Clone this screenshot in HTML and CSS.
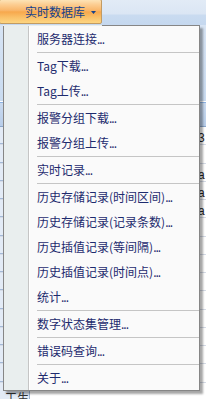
FILE: index.html
```html
<!DOCTYPE html>
<html lang="zh">
<head>
<meta charset="utf-8">
<link rel="stylesheet" href="styles.css">
</head>
<body>
<div class="app">
  <div class="tabstrip">
    <div class="dd-btn">
      <span class="dd-label">实时数据库</span>
      <svg class="dd-arrow" width="5" height="3" viewBox="0 0 5 3"><path d="M0 0H5L2.5 3Z" fill="#15428b"/></svg>
    </div>
  </div>
  <div class="ribbon"></div>
  <div class="grid-head"></div>
  <div class="grid">
    <div class="row"><span class="rh"></span><span class="cell">3</span></div>
    <div class="row"><span class="rh"></span><span class="cell"></span></div>
    <div class="row"><span class="rh"></span><span class="cell">a</span></div>
    <div class="row"><span class="rh"></span><span class="cell">a</span></div>
    <div class="row"><span class="rh"></span><span class="cell">a</span></div>
    <div class="row"><span class="rh"></span><span class="cell"></span></div>
    <div class="row"><span class="rh"></span><span class="cell"></span></div>
    <div class="row"><span class="rh"></span><span class="cell"></span></div>
    <div class="row"><span class="rh"></span><span class="cell"></span></div>
    <div class="row"><span class="rh"></span><span class="cell"></span></div>
    <div class="row"><span class="rh"></span><span class="cell"></span></div>
    <div class="row"><span class="rh"></span><span class="cell"></span></div>
    <div class="row"><span class="rh"></span><span class="cell"></span></div>
    <div class="row"><span class="rh"></span><span class="cell"></span></div>
    <div class="row"><span class="rh"><span class="rtext">工生</span></span><span class="cell"></span></div>
  </div>
</div>

<div class="menu">
  <div class="item">服务器连接<span class="dots">...</span></div>
  <div class="sep"></div>
  <div class="item">Tag下载<span class="dots">...</span></div>
  <div class="item">Tag上传<span class="dots">...</span></div>
  <div class="sep"></div>
  <div class="item">报警分组下载<span class="dots">...</span></div>
  <div class="item">报警分组上传<span class="dots">...</span></div>
  <div class="sep"></div>
  <div class="item">实时记录<span class="dots">...</span></div>
  <div class="sep"></div>
  <div class="item">历史存储记录(时间区间)<span class="dots">...</span></div>
  <div class="item">历史存储记录(记录条数)<span class="dots">...</span></div>
  <div class="item">历史插值记录(等间隔)<span class="dots">...</span></div>
  <div class="item">历史插值记录(时间点)<span class="dots">...</span></div>
  <div class="item">统计<span class="dots">...</span></div>
  <div class="sep"></div>
  <div class="item">数字状态集管理<span class="dots">...</span></div>
  <div class="sep"></div>
  <div class="item">错误码查询<span class="dots">...</span></div>
  <div class="sep"></div>
  <div class="item">关于<span class="dots">...</span></div>
</div>
</body>
</html>
```

FILE: styles.css
```css
* { box-sizing: border-box; }
html, body {
  margin: 0;
  padding: 0;
  width: 206px;
  height: 399px;
  overflow: hidden;
  font-family: "Noto Sans CJK SC", "Noto Sans", sans-serif;
  font-size: 12px;
}
body { position: relative; background: #ffffff; }

.app {
  display: flex;
  flex-direction: column;
  height: 399px;
  overflow: hidden;
}

.tabstrip {
  height: 25px;
  flex: none;
  background: linear-gradient(#e2ebf6 0, #dbe6f4 14px, #c9dbf0 15px, #c5d8ef 25px);
  display: flex;
}

.dd-btn {
  width: 103px;
  height: 25px;
  margin: -1px 0 0 -1px;
  border: 1px solid #c29b62;
  border-radius: 2px;
  background: linear-gradient(#fde3b6 0, #fccd91 20%, #f9b66a 45%, #f7a84d 52%, #fac068 75%, #fdd581 100%);
  display: flex;
  align-items: center;
  padding-left: 25px;
  color: #15428b;
}
.dd-label { line-height: 14px; padding-top: 1px; }
.dd-arrow { margin-left: 6px; margin-top: 1px; }

.ribbon {
  height: 77px;
  flex: none;
  background: linear-gradient(#d7e4f4, #c9dbf0);
  border-bottom: 1px solid #ffffff;
}
.grid-head {
  height: 25px;
  flex: none;
  background: linear-gradient(#c9daef, #b8cde9);
  border-top: 1px solid #8db2e3;
  border-bottom: 1px solid #8aa5c9;
}

.grid { flex: 1; background: #ffffff; min-height: 0; }
.row {
  height: 18.25px;
  display: flex;
  border-bottom: 1px solid #d5dbe6;
}
.rh {
  width: 30px;
  flex: none;
  background: #e3ebf6;
  border-right: 1px solid #9fb4d2;
  border-bottom: 1px solid #a3b8d6;
}
.rtext {
  display: block;
  padding: 9px 0 0 5px;
  color: #333;
  line-height: 12px;
  white-space: nowrap;
}
.cell {
  margin-left: auto;
  width: 8px;
  font-family: "Liberation Sans", sans-serif;
  font-size: 12px;
  line-height: 18px;
  color: #222;
  padding-top: 2px;
}

.menu {
  position: absolute;
  left: 3px;
  top: 25px;
  width: 197px;
  height: 366px;
  border: 1px solid #868686;
  background:
    linear-gradient(to right, #e9eeee 0, #e9eeee 24px, #c5c5c5 24px, #c5c5c5 25px, #ffffff 25px, #ffffff 26px, #fafafa 26px);
  box-shadow: 3px 3px 2px rgba(0, 0, 0, 0.35);
  color: #1e2b6e;
}
.menu::before {
  content: "";
  position: absolute;
  left: -1px;
  top: -1px;
  width: 99px;
  height: 1px;
  background: #e9eeee;
}
.item {
  height: 25px;
  line-height: 25px;
  padding-left: 33px;
  white-space: nowrap;
}
.dots { letter-spacing: -1px; }
.sep {
  height: 2px;
  margin-left: 33px;
  padding-top: 1px;
  border-bottom: 1px solid #c5c5c5;
}
```
